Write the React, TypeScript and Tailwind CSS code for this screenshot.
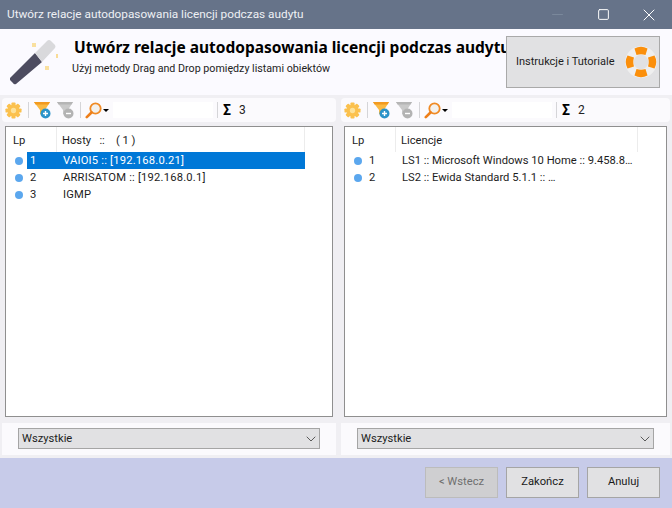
import { ChevronDown, Minus, Square, X } from "lucide-react";

const font = "font-['Roboto','Liberation_Sans',sans-serif]";

const Wand = () => (
  <svg width="50" height="50" viewBox="0 0 50 50">
    <path d="M2 41 L27 16 L34 25 L8 47 Q6 48 5 46 L2 43 Z" fill="#4d4c60" />
    <path d="M27 16 L39 4 Q41 2 43 4 L47 8 Q48 10 47 11 L34 25 Z" fill="#d9d9dc" />
    <rect x="24" y="6" width="4" height="4" fill="#f9e0a0" />
    <rect x="48" y="17" width="4" height="4" fill="#f9dc98" />
    <rect x="37" y="29" width="4" height="4" fill="#f9e0a0" />
  </svg>
);

const Lifebuoy = () => (
  <svg width="32" height="32" viewBox="0 0 32 32">
    <circle cx="16" cy="16" r="11.5" fill="none" stroke="#efefef" strokeWidth="8.5" />
    <path d="M9.5 2.5 Q16 -1 22.5 2.5 L20.5 9 Q16 7.5 11.5 9 Z" fill="#fb8f0b" />
    <path d="M9.5 29.5 Q16 33 22.5 29.5 L20.5 23 Q16 24.5 11.5 23 Z" fill="#fb8f0b" />
    <path d="M2.5 9.5 Q-1 16 2.5 22.5 L9 20.5 Q7.5 16 9 11.5 Z" fill="#fb8f0b" />
    <path d="M29.5 9.5 Q33 16 29.5 22.5 L23 20.5 Q24.5 16 23 11.5 Z" fill="#fb8f0b" />
  </svg>
);

const Gear = () => (
  <svg width="17" height="17" viewBox="0 0 18 18">
    <g fill="#fbc14e">
      {[0, 45, 90, 135, 180, 225, 270, 315].map((a) => (
        <rect key={a} x="6.8" y="0.5" width="4.4" height="5" rx="1" transform={`rotate(${a} 9 9)`} />
      ))}
      <circle cx="9" cy="9" r="6.2" />
    </g>
    <circle cx="9" cy="9" r="2.8" fill="#fde29a" />
  </svg>
);

const FunnelAdd = () => (
  <svg width="17" height="18" viewBox="0 0 17 18">
    <path d="M0 1 H16 L11 9 V16 L6 13 V9 Z" fill="#fbb941" />
    <path d="M0 1 H16 L14.5 3.5 H1.5 Z" fill="#f29a1f" />
    <circle cx="11.5" cy="12.5" r="5" fill="#2b93c9" />
    <path d="M9 12.5 H14 M11.5 10 V15" stroke="#fff" strokeWidth="1.4" />
  </svg>
);

const FunnelRemove = () => (
  <svg width="17" height="18" viewBox="0 0 17 18">
    <path d="M0 1 H16 L11 9 V16 L6 13 V9 Z" fill="#c9c9c9" />
    <path d="M0 1 H16 L14.5 3.5 H1.5 Z" fill="#b5b5b5" />
    <circle cx="11.5" cy="12.5" r="5" fill="#b3b3b3" />
    <path d="M9 12.5 H14" stroke="#fff" strokeWidth="1.4" />
  </svg>
);

const Magnifier = () => (
  <svg width="17" height="17" viewBox="0 0 17 17">
    <circle cx="10.5" cy="6.5" r="5.2" fill="#f3f1ee" stroke="#f08a24" strokeWidth="1.8" />
    <path d="M6.5 10.5 L1.8 15.2" stroke="#ee7f1a" strokeWidth="2.6" strokeLinecap="round" />
  </svg>
);

const Toolbar = ({ count }: { count: number }) => (
  <div className="flex h-[24px] items-center rounded-sm bg-[#fbfafd]">
    <div className="ml-[3px]">
      <Gear />
    </div>
    <div className="ml-[6px] h-[16px] w-px bg-[#d5d5d8]" />
    <div className="ml-[5px]">
      <FunnelAdd />
    </div>
    <div className="ml-[6px]">
      <FunnelRemove />
    </div>
    <div className="ml-[6px] h-[16px] w-px bg-[#d5d5d8]" />
    <div className="ml-[4px]">
      <Magnifier />
    </div>
    <div className="ml-[1px] h-0 w-0 border-x-[3px] border-t-[3px] border-x-transparent border-t-black" />
    <div className="ml-[4px] h-[16px] w-[100px] bg-white" />
    <div className="ml-[4px] h-[16px] w-px bg-[#d5d5d8]" />
    <span className="ml-[5px] w-[10px] text-[14px] font-bold leading-none text-black">Σ</span>
    <span className="ml-[6px] text-[12px] text-[#222]">{count}</span>
  </div>
);

type Row = { lp: number; text: string; selected?: boolean };

const ListPanel = ({
  head,
  rows,
  headRight,
  spaced,
}: {
  head: string;
  rows: Row[];
  headRight: number;
  spaced?: boolean;
}) => (
  <div className="h-[291px] overflow-hidden border border-[#8f8f8f] bg-white text-[11.2px] text-[#1d1d1d]">
    <div className="flex h-[25px] items-center" style={{ width: headRight }}>
      <div className="flex h-full w-[51px] shrink-0 items-center border-r border-[#ececec] pl-[7px] pt-[3px]">
        Lp
      </div>
      <div className="flex h-full flex-1 items-center border-r border-[#ececec] pl-[5px] pt-[3px] whitespace-pre">
        {head}
      </div>
    </div>
    {rows.map((r) => (
      <div key={r.lp} className="flex h-[17px] items-center" style={{ width: headRight }}>
        <div className="ml-[9px] h-[8px] w-[8px] shrink-0 rounded-full bg-[#5ba7ee]" />
        <div
          className={`ml-[4px] flex h-full min-w-0 flex-1 items-center pt-[1px] ${
            r.selected ? "bg-[#0078d7] text-white" : ""
          }`}
        >
          <span className="w-[36px] shrink-0 pl-[3px]">{r.lp}</span>
          <span className={`whitespace-nowrap ${spaced ? "tracking-[0.2px]" : ""}`}>{r.text}</span>
        </div>
      </div>
    ))}
  </div>
);

const Combo = () => (
  <div className="flex h-[21px] items-center justify-between border border-[#a5a5a5] bg-[#e1e1e3] pl-[3px] text-[11.2px] text-[#1d1d1d]">
    <span className="pt-[2px]">Wszystkie</span>
    <ChevronDown size={16} strokeWidth={1.3} className="text-[#444]" />
  </div>
);

const FootButton = ({ label, disabled }: { label: string; disabled?: boolean }) => (
  <div
    className={`flex h-[31px] w-[73px] items-center justify-center border text-[11.2px] ${
      disabled
        ? "border-[#bcbcbc] bg-[#cfcfd1] text-[#6f6f6f]"
        : "border-[#a5a5a5] bg-[#e1e1e3] text-[#1a1a1a]"
    }`}
  >
    {label}
  </div>
);

export default function App() {
  const hosts: Row[] = [
    { lp: 1, text: "VAIOI5 :: [192.168.0.21]", selected: true },
    { lp: 2, text: "ARRISATOM :: [192.168.0.1]" },
    { lp: 3, text: "IGMP" },
  ];
  const licenses: Row[] = [
    { lp: 1, text: "LS1 :: Microsoft Windows 10 Home :: 9.458.8…" },
    { lp: 2, text: "LS2 :: Ewida Standard 5.1.1 :: …" },
  ];

  return (
    <div className={`flex h-[508px] w-[672px] flex-col overflow-hidden bg-[#f0eff3] ${font}`}>
      {/* Title bar */}
      <div className="flex h-[29px] shrink-0 items-center justify-between bg-[#667389] pl-[7px] text-[11.8px] text-[#eef0f4]">
        Utwórz relacje autodopasowania licencji podczas audytu
        <div className="flex items-center">
          <div className="flex w-[46px] justify-center">
            <Minus size={17} strokeWidth={1} className="text-[#8390a3]" />
          </div>
          <div className="flex w-[46px] justify-center">
            <Square size={13} strokeWidth={1.8} className="text-white" />
          </div>
          <div className="flex w-[46px] justify-center">
            <X size={20} strokeWidth={1.2} className="text-white" />
          </div>
        </div>
      </div>

      {/* Header */}
      <div className="flex h-[66px] shrink-0 bg-[#fbfaff]">
        <div className="ml-[8px] mt-[8px] w-[66px] shrink-0">
          <Wand />
        </div>
        <div className="w-[432px] shrink-0 pt-[7px]">
          <div className="whitespace-nowrap font-['Noto_Sans','Liberation_Sans',sans-serif] text-[15.5px] font-bold leading-[22px] text-black">
            Utwórz relacje autodopasowania licencji podczas audytu
          </div>
          <div className="-ml-[2px] mt-[3px] whitespace-nowrap text-[10.7px] leading-[15px] text-[#1d1d1d]">
            Użyj metody Drag and Drop pomiędzy listami obiektów
          </div>
        </div>
        <div className="mt-[7px] flex h-[52px] w-[154px] shrink-0 items-center justify-between whitespace-nowrap border border-[#a9a9a9] bg-[#e1e1e3] pl-[9px] pr-[2px] text-[11px] text-[#1d1d1d]">
          Instrukcje i Tutoriale
          <Lifebuoy />
        </div>
      </div>

      {/* Two lists */}
      <div className="flex flex-1 gap-[5px] px-[2px] pt-[3px]">
        <div className="w-[334px] shrink-0">
          <Toolbar count={3} />
          <div className="mx-[3px] mt-[4px]">
            <ListPanel head="Hosty   ::    ( 1 )" rows={hosts} headRight={299} spaced />
          </div>
          <div className="mt-[6px] h-[32px] bg-[#fbfafd] px-[16px] pt-[5px]">
            <Combo />
          </div>
        </div>
        <div className="w-[329px] shrink-0">
          <Toolbar count={2} />
          <div className="mx-[3px] mt-[4px]">
            <ListPanel head="Licencje" rows={licenses} headRight={293} />
          </div>
          <div className="mt-[6px] h-[32px] bg-[#fbfafd] px-[16px] pt-[5px]">
            <Combo />
          </div>
        </div>
      </div>

      {/* Footer */}
      <div className="flex h-[50px] shrink-0 items-start justify-end gap-[8px] bg-[#c7cbe9] pr-[12px] pt-[9px]">
        <FootButton label="< Wstecz" disabled />
        <FootButton label="Zakończ" />
        <FootButton label="Anuluj" />
      </div>
    </div>
  );
}
